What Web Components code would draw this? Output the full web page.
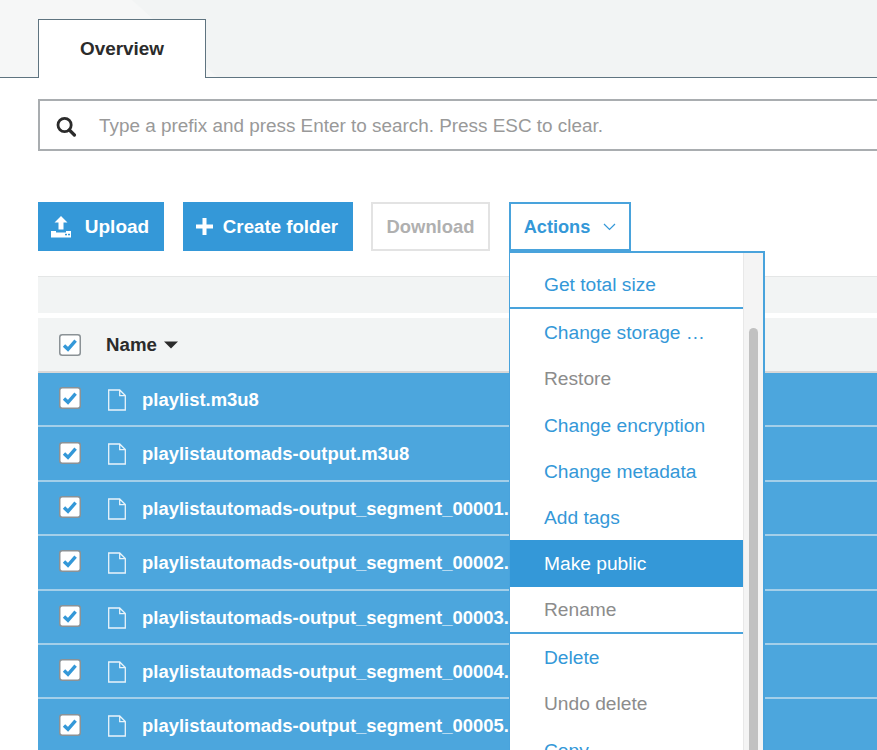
<!DOCTYPE html>
<html>
<head>
<meta charset="utf-8">
<style>
  html, body { margin: 0; padding: 0; height: 100%; overflow: hidden; background: #fff; }
  body { font-family: "Liberation Sans", Arial, sans-serif; color: #2b2b2b; }
</style>
</head>
<body>
<s3-page>
  <s3-tabs slot="tabs">Overview</s3-tabs>
  <s3-search slot="search" placeholder="Type a prefix and press Enter to search. Press ESC to clear."></s3-search>
  <s3-toolbar slot="toolbar"></s3-toolbar>
  <s3-table slot="table">
    <s3-row>playlist.m3u8</s3-row>
    <s3-row>playlistautomads-output.m3u8</s3-row>
    <s3-row>playlistautomads-output_segment_00001.</s3-row>
    <s3-row>playlistautomads-output_segment_00002.</s3-row>
    <s3-row>playlistautomads-output_segment_00003.</s3-row>
    <s3-row>playlistautomads-output_segment_00004.</s3-row>
    <s3-row>playlistautomads-output_segment_00005.</s3-row>
  </s3-table>
  <s3-menu slot="menu">
    <s3-menu-item divider>Get total size</s3-menu-item>
    <s3-menu-item>Change storage …</s3-menu-item>
    <s3-menu-item state="disabled">Restore</s3-menu-item>
    <s3-menu-item>Change encryption</s3-menu-item>
    <s3-menu-item>Change metadata</s3-menu-item>
    <s3-menu-item>Add tags</s3-menu-item>
    <s3-menu-item state="active">Make public</s3-menu-item>
    <s3-menu-item state="disabled" divider>Rename</s3-menu-item>
    <s3-menu-item>Delete</s3-menu-item>
    <s3-menu-item state="disabled">Undo delete</s3-menu-item>
    <s3-menu-item>Copy</s3-menu-item>
  </s3-menu>
</s3-page>

<script>
// small helper so each class only has to give its html
class Base extends HTMLElement {
  constructor() {
    super();
    this.attachShadow({mode: "open"});
  }
  connectedCallback() {
    const template = document.createElement("template");
    template.innerHTML = this.template();
    this.shadowRoot.appendChild(template.content.cloneNode(true));
  }
}

const CHECK = `
  <svg class="check" width="22" height="22" viewBox="0 0 22 22">
    <rect x=".75" y=".75" width="20.5" height="20.5" rx="2.5" fill="#fff" stroke="#8b9296" stroke-width="1.5"/>
    <path d="M5 11.5l4 3.800 7.600-8.600" fill="none" stroke="#3498d8" stroke-width="3.400"/>
  </svg>`;

class S3Page extends Base {
  template() {
    return `
    <style>
      :host { display: block; position: relative; width: 877px; height: 750px; overflow: hidden; }
      .body { padding: 21px 0 0 38px; width: 1100px; }
      .menu { position: absolute; left: 509px; top: 251px; }
    </style>
    <slot name="tabs"></slot>
    <div class="body">
      <slot name="search"></slot>
      <slot name="toolbar"></slot>
      <slot name="table"></slot>
    </div>
    <div class="menu"><slot name="menu"></slot></div>
    `;
  }
}

class S3Tabs extends Base {
  template() {
    return `
    <style>
      :host {
        display: block;
        height: 78px;
        box-sizing: border-box;
        padding: 19px 0 0 38px;
        border-bottom: 1px solid #5f7480;
        background: linear-gradient(42deg, #f6f7f7 145px, #f2f4f4 146px);
      }
      .tab {
        width: 168px;
        height: 59px;
        box-sizing: border-box;
        border: 1px solid #5f7480;
        border-bottom: 0;
        background: #fff;
        font: bold 18.9px "Liberation Sans", Arial, sans-serif;
        color: #2b2b2b;
        display: flex;
        align-items: center;
        justify-content: center;
      }
    </style>
    <div class="tab"><slot></slot></div>
    `;
  }
}

class S3Search extends Base {
  template() {
    return `
    <style>
      :host {
        display: flex;
        align-items: center;
        gap: 22px;
        height: 52px;
        box-sizing: border-box;
        width: 1000px;
        padding: 1px 0 0 15px;
        border: 2px solid #a9adb0;
        font: 18.9px "Liberation Sans", Arial, sans-serif;
        color: #999;
      }
      svg { flex: none; }
    </style>
    <svg width="22" height="22" viewBox="0 0 22 22">
      <circle cx="9.6" cy="10" r="6.6" fill="none" stroke="#2b2b2b" stroke-width="2.8"/>
      <path d="M14.4 15l5 5" stroke="#2b2b2b" stroke-width="3.2" stroke-linecap="round"/>
    </svg>
    <span>${this.getAttribute("placeholder")}</span>
    `;
  }
}

class S3Button extends Base {
  template() {
    return `
    <style>
      :host {
        display: flex;
        align-items: center;
        justify-content: center;
        box-sizing: border-box;
        height: 49px;
        border: 1px solid #3498d8;
        background: #3498d8;
        color: #fff;
        font: bold var(--size, 18.7px) "Liberation Sans", Arial, sans-serif;
        gap: var(--gap, 12px);
      }
      :host([kind="disabled"]) { background: #fff; border: 2px solid #e3e3e3; color: #b0b0b0; }
      :host([kind="outline"]) { background: #fff; border: 2px solid #49a3dc; color: #3498d8; }
    </style>
    <slot name="icon"></slot><slot></slot><slot name="after"></slot>
    `;
  }
}

class S3Toolbar extends Base {
  template() {
    return `
    <style>
      :host { display: flex; gap: 19px; margin-top: 51px; }
      s3-button:nth-child(3) { margin-right: -1px; }
    </style>
    <s3-button style="width:126px;--gap:13px;--size:19px;padding-right:3px">
      <svg slot="icon" width="22" height="24" viewBox="0 0 22 24">
        <path d="M11 1l6.5 6.5h-4v7h-5v-7h-4z" fill="#fff"/>
        <path d="M1 16h5v1.500h10V16h5v6.500H1z" fill="#fff"/>
        <rect x="15" y="18.800" width="2" height="1.500" fill="#3498d8"/>
        <rect x="18" y="18.800" width="2" height="1.500" fill="#3498d8"/>
      </svg>
      Upload
    </s3-button>
    <s3-button style="width:170px;--gap:10px;padding-right:2px">
      <svg slot="icon" width="17" height="17" viewBox="0 0 17 17">
        <path d="M6.500 0h4v6.500H17v4h-6.500V17h-4v-6.500H0v-4h6.500z" fill="#fff"/>
      </svg>
      Create folder
    </s3-button>
    <s3-button kind="disabled" style="width:119px;--size:18.4px">Download</s3-button>
    <s3-button kind="outline" style="width:122px;--gap:13px;--size:18.2px;padding-top:1px">
      Actions
      <svg slot="after" width="13" height="8" viewBox="0 0 13 8">
        <path d="M1 1l5.500 5.500L12 1" fill="none" stroke="#3498d8" stroke-width="1.200"/>
      </svg>
    </s3-button>
    `;
  }
}

class S3Table extends Base {
  template() {
    return `
    <style>
      :host { display: block; width: 1000px; margin-top: 25px; }
      .bar { height: 37px; box-sizing: border-box; background: #f2f4f4; border-top: 1px solid #e4e6e6; }
      .head {
        height: 55px;
        box-sizing: border-box;
        margin-top: 5px;
        padding-left: 20.5px;
        background: #f2f4f4;
        border-bottom: 2px solid #d8d8d8;
        display: flex;
        align-items: center;
        gap: 25.5px;
        font: bold 18.7px "Liberation Sans", Arial, sans-serif;
        color: #2b2b2b;
      }
      .name { display: flex; align-items: center; gap: 7px; }
      svg { display: block; }
    </style>
    <div class="bar"></div>
    <div class="head">
      ${CHECK}
      <div class="name">Name
        <svg width="14" height="8" viewBox="0 0 14 8"><path d="M0 .5h14L7 7.500z" fill="#2b2b2b"/></svg>
      </div>
    </div>
    <slot></slot>
    `;
  }
}

class S3Row extends Base {
  template() {
    return `
    <style>
      :host {
        display: flex;
        align-items: center;
        height: 54.4px;
        box-sizing: border-box;
        padding: 1.5px 0 0 20.5px;
        background: #4ca6dd;
        border-bottom: 2px solid #a4cfe9;
        color: #fff;
        font: bold 18.45px "Liberation Sans", Arial, sans-serif;
        white-space: nowrap;
      }
      .check { margin-top: -3.5px; }
      .file { margin: 0 15px 0 26.5px; display: block; }
      svg { flex: none; }
    </style>
    ${CHECK}
    <svg class="file" width="20" height="22" viewBox="0 0 20 22">
      <path d="M1.700 1h11l5.600 5.600V21H1.700z M12.700 1v5.600h5.600" fill="none" stroke="#eaf4fa" stroke-width="1.300"/>
    </svg>
    <slot></slot>
    `;
  }
}

class S3Menu extends Base {
  template() {
    return `
    <style>
      :host {
        display: flex;
        width: 256px;
        height: 520px;
        box-sizing: border-box;
        background: #fff;
        border: 2px solid #49a3dc;
        border-left-width: 1px;
        border-bottom: 0;
        overflow: hidden;
      }
      .list { width: 233px; flex: none; padding-top: 8.5px; }
      .track { flex: 1; background: #f4f4f4; border-left: 1px solid #e8e8e8; padding: 75px 5px 0; }
      .thumb { height: 500px; background: #c1c1c1; border-radius: 6px; }
    </style>
    <div class="list"><slot></slot></div>
    <div class="track"><div class="thumb"></div></div>
    `;
  }
}

class S3MenuItem extends Base {
  template() {
    return `
    <style>
      :host {
        display: flex;
        align-items: center;
        height: 46.3px;
        box-sizing: border-box;
        padding: 2px 0 0 34px;
        color: #3498d8;
        font: 19.2px "Liberation Sans", Arial, sans-serif;
      }
      :host([state="disabled"]) { color: #8c8c8c; }
      :host([state="active"]) { background: #3498d8; color: #fff; }
      :host([divider]) { border-bottom: 2px solid #49a3dc; height: 47.3px; }
    </style>
    <slot></slot>
    `;
  }
}

// children first so nested elements are ready when the page upgrades
customElements.define("s3-button", S3Button);
customElements.define("s3-row", S3Row);
customElements.define("s3-menu-item", S3MenuItem);
customElements.define("s3-tabs", S3Tabs);
customElements.define("s3-search", S3Search);
customElements.define("s3-toolbar", S3Toolbar);
customElements.define("s3-table", S3Table);
customElements.define("s3-menu", S3Menu);
customElements.define("s3-page", S3Page);
</script>
</body>
</html>
